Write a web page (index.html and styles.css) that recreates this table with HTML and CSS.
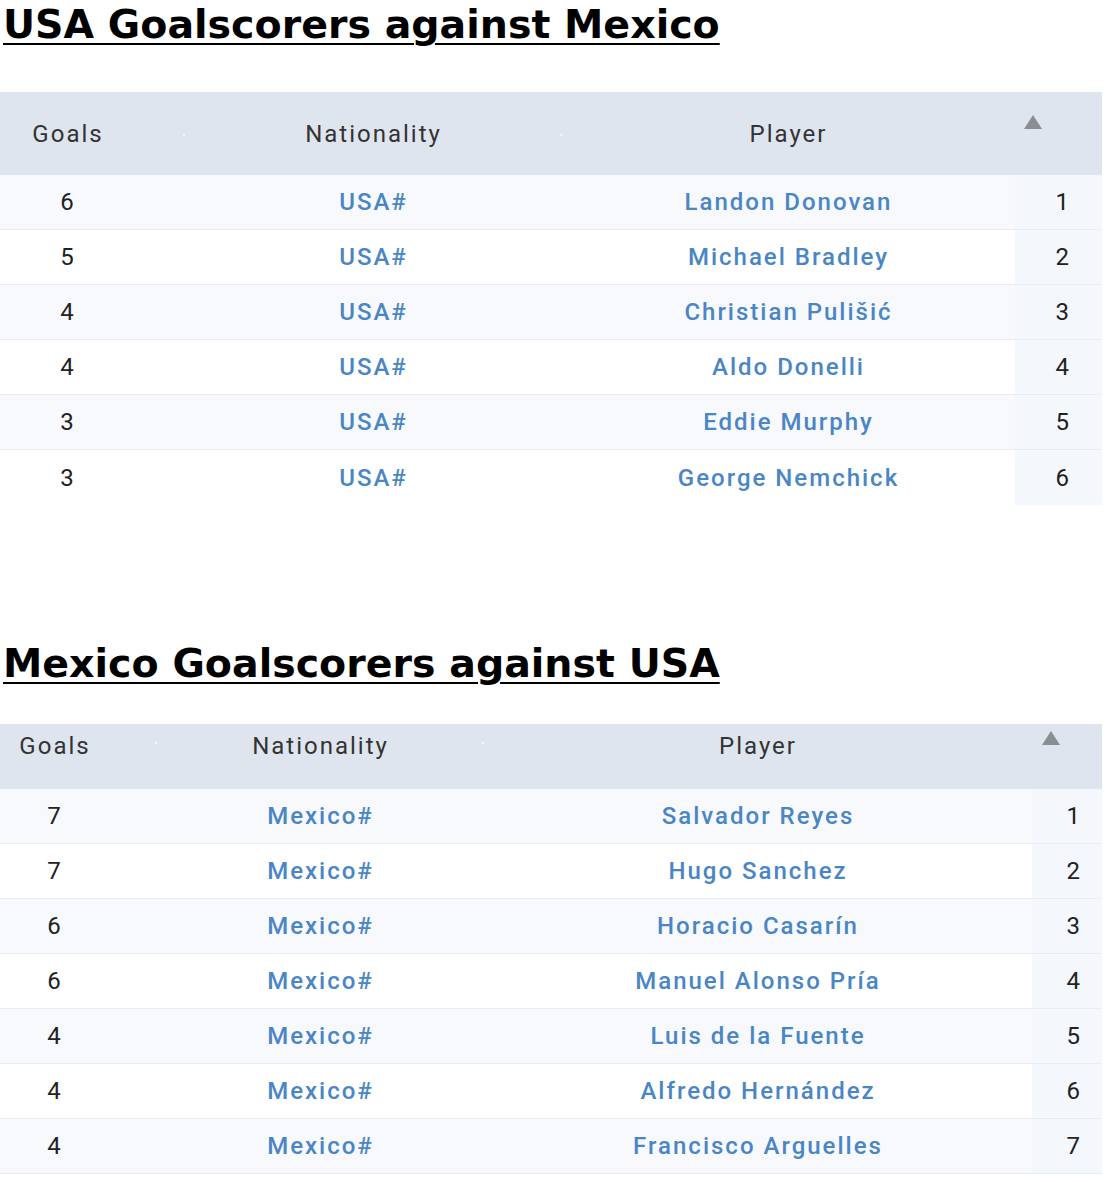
FILE: index.html
```html
<!DOCTYPE html>
<html>
<head>
<meta charset="utf-8">
<link rel="stylesheet" href="styles.css">
</head>
<body>
<div class="page">
  <h2 class="title">USA Goalscorers against Mexico</h2>
  <div class="table t1">
    <div class="row head">
      <div class="c goals">Goals<span class="dot"></span></div>
      <div class="c nat">Nationality<span class="dot"></span></div>
      <div class="c player">Player</div>
      <div class="c rank"><span class="arrow"></span></div>
    </div>
    <div class="row odd"><div class="c goals">6</div><div class="c nat link">USA#</div><div class="c player link">Landon Donovan</div><div class="c rank">1</div></div>
    <div class="row"><div class="c goals">5</div><div class="c nat link">USA#</div><div class="c player link">Michael Bradley</div><div class="c rank">2</div></div>
    <div class="row odd"><div class="c goals">4</div><div class="c nat link">USA#</div><div class="c player link">Christian Pulišić</div><div class="c rank">3</div></div>
    <div class="row"><div class="c goals">4</div><div class="c nat link">USA#</div><div class="c player link">Aldo Donelli</div><div class="c rank">4</div></div>
    <div class="row odd"><div class="c goals">3</div><div class="c nat link">USA#</div><div class="c player link">Eddie Murphy</div><div class="c rank">5</div></div>
    <div class="row last"><div class="c goals">3</div><div class="c nat link">USA#</div><div class="c player link">George Nemchick</div><div class="c rank">6</div></div>
  </div>

  <h2 class="title title2">Mexico Goalscorers against USA</h2>
  <div class="table t2">
    <div class="row head">
      <div class="c goals">Goals<span class="dot"></span></div>
      <div class="c nat">Nationality<span class="dot"></span></div>
      <div class="c player">Player</div>
      <div class="c rank"><span class="arrow"></span></div>
    </div>
    <div class="row odd"><div class="c goals">7</div><div class="c nat link">Mexico#</div><div class="c player link">Salvador Reyes</div><div class="c rank">1</div></div>
    <div class="row"><div class="c goals">7</div><div class="c nat link">Mexico#</div><div class="c player link">Hugo Sanchez</div><div class="c rank">2</div></div>
    <div class="row odd"><div class="c goals">6</div><div class="c nat link">Mexico#</div><div class="c player link">Horacio Casarín</div><div class="c rank">3</div></div>
    <div class="row"><div class="c goals">6</div><div class="c nat link">Mexico#</div><div class="c player link">Manuel Alonso Pría</div><div class="c rank">4</div></div>
    <div class="row odd"><div class="c goals">4</div><div class="c nat link">Mexico#</div><div class="c player link">Luis de la Fuente</div><div class="c rank">5</div></div>
    <div class="row"><div class="c goals">4</div><div class="c nat link">Mexico#</div><div class="c player link">Alfredo Hernández</div><div class="c rank">6</div></div>
    <div class="row odd"><div class="c goals">4</div><div class="c nat link">Mexico#</div><div class="c player link">Francisco Arguelles</div><div class="c rank">7</div></div>
  </div>
</div>
</body>
</html>
```

FILE: styles.css
```css
html, body {
  margin: 0;
  padding: 0;
  background: #ffffff;
}

.page {
  width: 1102px;
  padding-top: 1px;
}

.title {
  font-family: "DejaVu Sans", "Liberation Sans", sans-serif;
  font-weight: bold;
  font-size: 39.5px;
  line-height: 46px;
  color: #000;
  text-decoration: underline;
  text-decoration-thickness: 2px;
  text-underline-offset: 5px;
  margin: 0 0 45px 3px;
  letter-spacing: 0;
}

.title2 {
  margin-top: 135px;
  margin-bottom: 38px;
}

.table {
  font-family: Roboto, "Noto Sans", sans-serif;
  font-size: 24px;
  font-weight: 500;
  letter-spacing: 2px;
  color: #222;
}

.row {
  display: grid;
  height: 55px;
  align-items: stretch;
  border-bottom: 1px solid #e8edf3;
  box-sizing: border-box;
  background: #ffffff;
}

.row.odd {
  background: #f7f9fc;
}

.row.last {
  border-bottom: none;
}

.t1 .row { grid-template-columns: 185px 377px 453px 87px; }
.t2 .row { grid-template-columns: 157px 327px 548px 70px; }

.c {
  display: flex;
  align-items: center;
  justify-content: center;
  position: relative;
}

.goals, .rank {
  font-weight: 400;
}

.t1 .goals { padding-right: 49px; }
.t2 .goals { padding-right: 47px; }

.rank {
  background: #f4f7fb;
  justify-content: flex-end;
}

.t1 .rank { padding-right: 31px; }
.t2 .rank { padding-right: 20px; }

.link {
  color: #4a86c6;
}

.row.head {
  background: #dfe5ef;
  color: #333;
  border-bottom: none;
  font-weight: 400;
}

.t1 .row.head { height: 83px; }
.t2 .row.head { height: 65px; align-items: start; }
.t2 .row.head .c { padding-top: 8px; align-items: flex-start; }

.row.head .rank {
  background: transparent;
  justify-content: flex-start;
  align-items: flex-start;
}

.t1 .row.head .rank { padding: 23px 0 0 9px; }
.t2 .row.head .rank { padding: 7px 0 0 10px; }

.arrow {
  display: block;
  width: 0;
  height: 0;
  border-left: 9px solid transparent;
  border-right: 9px solid transparent;
  border-bottom: 14px solid #8a8d92;
}

.dot {
  position: absolute;
  right: 0;
  top: 50%;
  width: 2px;
  height: 2px;
  background: #f2f5f9;
}
```
